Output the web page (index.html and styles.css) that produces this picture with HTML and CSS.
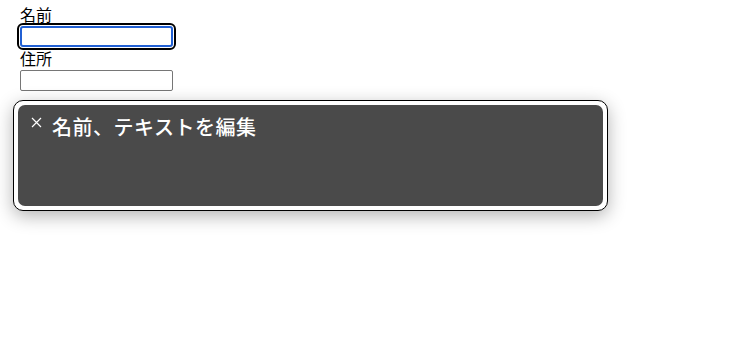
FILE: index.html
```html
<!DOCTYPE html>
<html>
<head>
	<meta charset="utf-8">
	<title>編集</title>
	<link rel="stylesheet" href="styles.css">
</head>
<body>
	<div class="form">
		<label class="field-label" for="name">名前</label>
		<input class="field focused" id="name" type="text">
		<label class="field-label" for="address">住所</label>
		<input class="field" id="address" type="text">
	</div>
	<div class="popup">
		<div class="popup-inner">
			<div class="popup-title">
				<svg class="close" width="11" height="11" viewBox="0 0 11 11">
					<path d="M1 1 L10 10 M10 1 L1 10" stroke="#fff" stroke-width="1.2" fill="none"/>
				</svg>
				<span class="title-text">名前、テキストを編集</span>
			</div>
		</div>
	</div>
</body>
</html>
```

FILE: styles.css
```css
html {
	background: #fff;
}
body {
	margin: 0;
	min-height: 358px;
	padding-bottom: 1px;
	box-sizing: border-box;
	font-family: "Noto Sans CJK JP", "Noto Sans", sans-serif;
	background: #fff;
	color: #000;
}
.form {
	padding: 3px 0 0 20px;
}
.field-label {
	display: block;
	font-size: 16px;
	line-height: 23px;
}
.field {
	display: block;
	box-sizing: border-box;
	width: 153px;
	height: 21px;
	margin: 0;
	padding: 1px 2px;
	border: 1px solid #767676;
	border-radius: 2px;
	font-size: 13px;
	background: #fff;
}
.field.focused {
	border: 2px solid #2160d4;
	outline: 2px solid #000;
	outline-offset: 1px;
	border-radius: 3px;
}
.popup {
	width: 595px;
	height: 111px;
	margin: 9px 0 0 13px;
	box-sizing: border-box;
	padding: 4px;
	background: #fff;
	border: 1px solid #000;
	border-radius: 10px;
	box-shadow: 0 5px 18px rgba(0, 0, 0, 0.3);
}
.popup-inner {
	height: 100%;
	background: #4a4a4a;
	border-radius: 7px;
	padding: 9px 13px;
	box-sizing: border-box;
}
.popup-title {
	display: flex;
	align-items: flex-start;
	gap: 10px;
	color: #fff;
}
.close {
	flex: none;
	margin-top: 3px;
}
.title-text {
	font-size: 20px;
	font-weight: 500;
	line-height: 25px;
	letter-spacing: 0.5px;
}
```
